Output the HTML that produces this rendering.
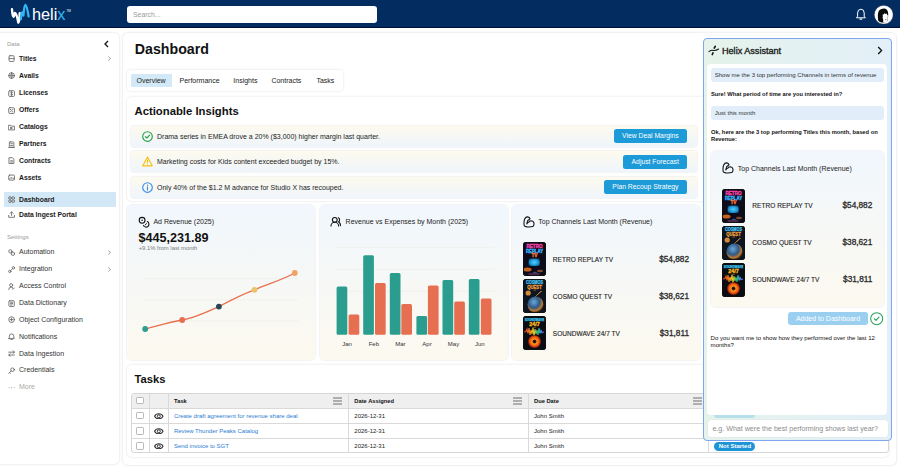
<!DOCTYPE html>
<html><head><meta charset="utf-8">
<style>
*{box-sizing:border-box;margin:0;padding:0}
html,body{width:900px;height:469px;overflow:hidden;background:#fff;font-family:"Liberation Sans",sans-serif;color:#111;position:relative}
.a{position:absolute}
.nw{white-space:nowrap}
#hdr{left:0;top:0;width:900px;height:28.4px;background:#032d60;border-bottom:1.6px solid #000f38}
#search{left:127px;top:6px;width:250px;height:17px;background:#fff;border-radius:3px}
#search span{position:absolute;left:6px;top:4.6px;font-size:6.9px;color:#9a9a9a}
.card{background:#fff;border-radius:5px;box-shadow:0 0 2px 1px rgba(0,0,0,0.07)}
#side{left:-6px;top:32.8px;width:125px;height:431.5px}
.sl{position:absolute;left:7px;font-size:6px;color:#8a8a8a}
.si{position:absolute;left:19px;font-size:6.9px;line-height:8px;color:#222;white-space:nowrap}
.si.b{font-weight:700;color:#1a1a1a}
.ic{position:absolute;left:8px;width:7px;height:7px}
.chev{position:absolute;left:106px;width:5px;height:6px}
#main{left:123.3px;top:32.8px;width:772.7px;height:432.2px}
.sub{position:absolute;background:#fff;border-radius:5px;box-shadow:0 0 2px 1px rgba(0,0,0,0.06)}
.tab{position:absolute;top:80.5px;font-size:7px;line-height:8px;color:#222;white-space:nowrap;transform:translateY(-50%)}
.row{position:absolute;left:131px;width:566px;height:21px;border-radius:3px;background:linear-gradient(#fdfaee,#eff5fc);box-shadow:0 0 1px 1px rgba(0,0,0,0.05)}
.row .t{position:absolute;left:26px;top:7px;font-size:7px;line-height:8px;color:#222;white-space:nowrap}
.btn{position:absolute;right:10px;top:3.5px;height:14px;background:#1d9ad8;border-radius:2.5px;color:#fff;font-size:6.8px;line-height:14px;text-align:center;white-space:nowrap}
.cc{position:absolute;top:205px;height:155px;border-radius:5px;background:linear-gradient(#f1f7fd,#fcf9ef);box-shadow:0 0 1px 1px rgba(0,0,0,0.05)}
.ctitle{position:absolute;font-size:7px;line-height:8px;color:#222;white-space:nowrap}
.ch{position:absolute;width:23px;height:34px;border-radius:2.5px;overflow:hidden;background:#0b0b14}
.cn{position:absolute;font-size:6.5px;line-height:8px;color:#222;white-space:nowrap;letter-spacing:0.05px;-webkit-text-stroke:0.12px #222}
.cp{position:absolute;font-size:8.25px;line-height:10px;color:#2a2a2a;font-weight:400;white-space:nowrap;-webkit-text-stroke:0.3px #2a2a2a}
table{border-collapse:collapse}
</style></head><body>

<!-- HEADER -->
<div id="hdr" class="a">
  <svg class="a" style="left:8px;top:2px" width="24" height="24" viewBox="8 2 24 24">
    <path d="M12 9.3 Q12.4 16.8 13.5 16.8 Q14.3 16.6 14.8 12.9 Q16.6 13.2 18.3 22.6 Q19.6 21.5 19.7 13.2" fill="none" stroke="#fff" stroke-width="2.4" stroke-linecap="round" stroke-linejoin="round"/>
    <path d="M20.9 19.3 Q21.2 12.2 22.1 12.3 Q22.9 12.8 23.4 15.5 Q24.2 4.9 25.3 4.9 Q26.8 5.2 28.6 16.4" fill="none" stroke="#2eb5f2" stroke-width="2.3" stroke-linecap="round" stroke-linejoin="round"/>
  </svg>
  <div class="a nw" style="left:32px;top:5px;font-size:16.3px;line-height:19px;color:#fff;letter-spacing:0">heli<span style="color:#35b8f2">x</span></div>
  <div class="a nw" style="left:66.5px;top:9px;font-size:3px;color:#fff">TM</div>
  <div id="search" class="a"><span>Search...</span></div>
  <svg class="a" style="left:855px;top:8px" width="12" height="13" viewBox="0 0 12 13">
    <path d="M2.6 8.6 L2.6 5 Q2.6 1.2 5.9 1.2 Q9.2 1.2 9.2 5 L9.2 8.6 L10.3 9.3 L10.3 9.8 L1.5 9.8 L1.5 9.3 Z" fill="none" stroke="#fff" stroke-width="1" stroke-linejoin="round"/>
    <path d="M5 11.1 L6.8 11.1" stroke="#fff" stroke-width="1.1" stroke-linecap="round"/>
  </svg>
  <svg class="a" style="left:873.5px;top:4.7px" width="19.4" height="19.4" viewBox="0 0 19.4 19.4">
    <circle cx="9.7" cy="9.7" r="9.5" fill="#fff" stroke="#0b1c45" stroke-width="0.5"/>
    <path d="M4.2 15.5 Q3.2 9 5 5.5 Q7.2 3.2 10.5 3.4 Q13.8 4 14.2 8.5 Q14.4 13 13.2 16.2 Q10.5 18 7.5 17.5 Q5 17 4.2 15.5Z" fill="#0a0a0a"/>
    <path d="M8.6 9.8 Q10 9.4 10.8 8 Q11.6 9.6 12.6 8.6 Q13.2 10 13.9 10.6 Q14 14 13 16.4 Q11 17.6 9.2 17.2 Q9.6 14.5 8.6 12.8 Q9.2 11.4 8.6 9.8Z" fill="#fff"/>
    <path d="M11.2 14.6 L12.3 14.9" stroke="#222" stroke-width="0.7"/>
  </svg>
</div>

<!-- SIDEBAR -->
<div id="side" class="a card"></div>
<!--SIDE--><div class="sl" style="top:40.8px;color:#9a9a9a">Data</div>
<svg class="a" style="left:103px;top:39.6px" width="7" height="8" viewBox="0 0 7 8"><path d="M5 1 L2 4 L5 7" fill="none" stroke="#111" stroke-width="1.3"/></svg>
<div class="sl" style="top:234px;color:#9a9a9a">Settings</div>
<div class="a" style="left:4px;top:192.2px;width:111.5px;height:14.5px;background:#d3e8f6;border-radius:1px"></div>
<div class="si" style="top:54.699999999999996px;font-size:6.8px;font-weight:700;color:#1a1a1a">Titles</div>
<svg class="a" style="left:7.7px;top:55.3px" width="7.2" height="7.2" viewBox="0 0 8 8"><rect x="1.2" y="0.8" width="5.6" height="6.4" rx="1" stroke="#666" stroke-width="0.95" fill="none" stroke-linecap="round" stroke-linejoin="round"/><path d="M1.2 4H6.8" stroke="#666" stroke-width="0.95" fill="none" stroke-linecap="round" stroke-linejoin="round"/></svg>
<svg class="a" style="left:106.5px;top:56.3px" width="5" height="5" viewBox="0 0 5 5"><path d="M1.3 0.5L3.5 2.5L1.3 4.5" fill="none" stroke="#888" stroke-width="0.8"/></svg>
<div class="si" style="top:71.6px;font-size:6.8px;font-weight:700;color:#1a1a1a">Avails</div>
<svg class="a" style="left:7.7px;top:72.2px" width="7.2" height="7.2" viewBox="0 0 8 8"><circle cx="4" cy="4" r="3.2" stroke="#666" stroke-width="0.95" fill="none" stroke-linecap="round" stroke-linejoin="round"/><path d="M0.8 4H7.2M4 0.8Q2 4 4 7.2Q6 4 4 0.8" stroke="#666" stroke-width="0.95" fill="none" stroke-linecap="round" stroke-linejoin="round"/></svg>
<div class="si" style="top:89.1px;font-size:6.8px;font-weight:700;color:#1a1a1a">Licenses</div>
<svg class="a" style="left:7.7px;top:89.7px" width="7.2" height="7.2" viewBox="0 0 8 8"><rect x="0.8" y="0.8" width="6.4" height="6.4" rx="1.2" stroke="#666" stroke-width="0.95" fill="none" stroke-linecap="round" stroke-linejoin="round"/><path d="M5 2.6Q4 2 3.2 2.6Q2.6 3.5 4 4Q5.4 4.5 4.8 5.4Q4 6 3 5.4M4 1.8V6.2" stroke="#666" stroke-width="0.95" fill="none" stroke-linecap="round" stroke-linejoin="round"/></svg>
<div class="si" style="top:106.0px;font-size:6.8px;font-weight:700;color:#1a1a1a">Offers</div>
<svg class="a" style="left:7.7px;top:106.60000000000001px" width="7.2" height="7.2" viewBox="0 0 8 8"><rect x="0.8" y="0.8" width="6.4" height="6.4" rx="1.2" stroke="#666" stroke-width="0.95" fill="none" stroke-linecap="round" stroke-linejoin="round"/><path d="M2.5 5.5L5.5 2.5" stroke="#666" stroke-width="0.95" fill="none" stroke-linecap="round" stroke-linejoin="round"/><circle cx="2.7" cy="2.7" r="0.6" fill="#444"/><circle cx="5.3" cy="5.3" r="0.6" fill="#444"/></svg>
<div class="si" style="top:122.89999999999999px;font-size:6.8px;font-weight:700;color:#1a1a1a">Catalogs</div>
<svg class="a" style="left:7.7px;top:123.5px" width="7.2" height="7.2" viewBox="0 0 8 8"><path d="M0.8 1.5H3.2L4 2.4H7.2V6.6H0.8Z" stroke="#666" stroke-width="0.95" fill="none" stroke-linecap="round" stroke-linejoin="round"/><path d="M3.3 3.6L5 4.5L3.3 5.4Z" stroke="#666" stroke-width="0.95" fill="none" stroke-linecap="round" stroke-linejoin="round"/></svg>
<div class="si" style="top:139.9px;font-size:6.8px;font-weight:700;color:#1a1a1a">Partners</div>
<svg class="a" style="left:7.7px;top:140.5px" width="7.2" height="7.2" viewBox="0 0 8 8"><rect x="1.5" y="1" width="5" height="6" rx="0.8" stroke="#666" stroke-width="0.95" fill="none" stroke-linecap="round" stroke-linejoin="round"/><path d="M0.8 7.2H7.2M3 3H5M3 5H5" stroke="#666" stroke-width="0.95" fill="none" stroke-linecap="round" stroke-linejoin="round"/></svg>
<div class="si" style="top:156.70000000000002px;font-size:6.8px;font-weight:700;color:#1a1a1a">Contracts</div>
<svg class="a" style="left:7.7px;top:157.3px" width="7.2" height="7.2" viewBox="0 0 8 8"><path d="M1.5 0.8H5L6.6 2.4V7.2H1.5Z" stroke="#666" stroke-width="0.95" fill="none" stroke-linecap="round" stroke-linejoin="round"/><path d="M3 4.2H5M3 5.6H5" stroke="#666" stroke-width="0.95" fill="none" stroke-linecap="round" stroke-linejoin="round"/></svg>
<div class="si" style="top:173.60000000000002px;font-size:6.8px;font-weight:700;color:#1a1a1a">Assets</div>
<svg class="a" style="left:7.7px;top:174.20000000000002px" width="7.2" height="7.2" viewBox="0 0 8 8"><rect x="0.8" y="1.2" width="6.4" height="5.6" rx="1" stroke="#666" stroke-width="0.95" fill="none" stroke-linecap="round" stroke-linejoin="round"/><path d="M1.5 5.8L3.2 3.8L4.5 5L5.3 4.2L6.5 5.8" stroke="#666" stroke-width="0.95" fill="none" stroke-linecap="round" stroke-linejoin="round"/></svg>
<div class="si" style="top:195.8px;font-size:6.8px;font-weight:700;color:#1a1a1a">Dashboard</div>
<svg class="a" style="left:7.7px;top:196.4px" width="7.2" height="7.2" viewBox="0 0 8 8"><circle cx="2.2" cy="2.2" r="1.5" stroke="#666" stroke-width="0.95" fill="none" stroke-linecap="round" stroke-linejoin="round"/><circle cx="5.8" cy="2.2" r="1.5" stroke="#666" stroke-width="0.95" fill="none" stroke-linecap="round" stroke-linejoin="round"/><circle cx="2.2" cy="5.8" r="1.5" stroke="#666" stroke-width="0.95" fill="none" stroke-linecap="round" stroke-linejoin="round"/><circle cx="5.8" cy="5.8" r="1.5" stroke="#666" stroke-width="0.95" fill="none" stroke-linecap="round" stroke-linejoin="round"/></svg>
<div class="si" style="top:210.8px;font-size:6.8px;font-weight:700;color:#1a1a1a">Data Ingest Portal</div>
<svg class="a" style="left:7.7px;top:211.4px" width="7.2" height="7.2" viewBox="0 0 8 8"><path d="M0.8 4.8V7H7.2V4.8M4 5V1M2.4 2.6L4 1L5.6 2.6" stroke="#666" stroke-width="0.95" fill="none" stroke-linecap="round" stroke-linejoin="round"/></svg>
<div class="si" style="top:248.3px;font-size:7.0px;color:#333">Automation</div>
<svg class="a" style="left:7.7px;top:248.9px" width="7.2" height="7.2" viewBox="0 0 8 8"><circle cx="2.6" cy="2.6" r="1.8" stroke="#666" stroke-width="0.95" fill="none" stroke-linecap="round" stroke-linejoin="round"/><circle cx="5.5" cy="5.3" r="1.9" stroke="#666" stroke-width="0.95" fill="none" stroke-linecap="round" stroke-linejoin="round"/><path d="M3.6 4 L4.3 4.6" stroke="#666" stroke-width="0.95" fill="none" stroke-linecap="round" stroke-linejoin="round"/></svg>
<svg class="a" style="left:106.5px;top:249.9px" width="5" height="5" viewBox="0 0 5 5"><path d="M1.3 0.5L3.5 2.5L1.3 4.5" fill="none" stroke="#888" stroke-width="0.8"/></svg>
<div class="si" style="top:265.3px;font-size:7.0px;color:#333">Integration</div>
<svg class="a" style="left:7.7px;top:265.9px" width="7.2" height="7.2" viewBox="0 0 8 8"><circle cx="2" cy="6" r="1.3" stroke="#666" stroke-width="0.95" fill="none" stroke-linecap="round" stroke-linejoin="round"/><circle cx="6" cy="2" r="1.3" stroke="#666" stroke-width="0.95" fill="none" stroke-linecap="round" stroke-linejoin="round"/><path d="M3 5L5 3" stroke="#666" stroke-width="0.95" fill="none" stroke-linecap="round" stroke-linejoin="round"/></svg>
<svg class="a" style="left:106.5px;top:266.9px" width="5" height="5" viewBox="0 0 5 5"><path d="M1.3 0.5L3.5 2.5L1.3 4.5" fill="none" stroke="#888" stroke-width="0.8"/></svg>
<div class="si" style="top:282.1px;font-size:7.0px;color:#333">Access Control</div>
<svg class="a" style="left:7.7px;top:282.7px" width="7.2" height="7.2" viewBox="0 0 8 8"><circle cx="3.5" cy="2.4" r="1.7" stroke="#666" stroke-width="0.95" fill="none" stroke-linecap="round" stroke-linejoin="round"/><path d="M0.8 7.2Q0.8 4.6 3.5 4.6Q4.6 4.6 5.2 5.1M4.9 6.3L5.7 7L7.2 5.4" stroke="#666" stroke-width="0.95" fill="none" stroke-linecap="round" stroke-linejoin="round"/></svg>
<div class="si" style="top:298.90000000000003px;font-size:7.0px;color:#333">Data Dictionary</div>
<svg class="a" style="left:7.7px;top:299.5px" width="7.2" height="7.2" viewBox="0 0 8 8"><rect x="1" y="0.8" width="6" height="6.4" rx="0.8" stroke="#666" stroke-width="0.95" fill="none" stroke-linecap="round" stroke-linejoin="round"/><path d="M2.8 2.5H5.2M2.8 4H5.2M2.8 5.5H4.5" stroke="#666" stroke-width="0.95" fill="none" stroke-linecap="round" stroke-linejoin="round"/></svg>
<div class="si" style="top:315.7px;font-size:7.0px;color:#333">Object Configuration</div>
<svg class="a" style="left:7.7px;top:316.29999999999995px" width="7.2" height="7.2" viewBox="0 0 8 8"><circle cx="4" cy="4" r="3.2" stroke="#666" stroke-width="0.95" fill="none" stroke-linecap="round" stroke-linejoin="round"/><path d="M4 2.4V5.6M2.4 4H5.6" stroke="#666" stroke-width="0.95" fill="none" stroke-linecap="round" stroke-linejoin="round"/></svg>
<div class="si" style="top:332.5px;font-size:7.0px;color:#333">Notifications</div>
<svg class="a" style="left:7.7px;top:333.09999999999997px" width="7.2" height="7.2" viewBox="0 0 8 8"><path d="M1.5 5.6V3.6Q1.5 1 4 1Q6.5 1 6.5 3.6V5.6L7.1 6.2H0.9Z M3.2 7.2H4.8" stroke="#666" stroke-width="0.95" fill="none" stroke-linecap="round" stroke-linejoin="round"/></svg>
<div class="si" style="top:349.7px;font-size:7.0px;color:#333">Data Ingestion</div>
<svg class="a" style="left:7.7px;top:350.29999999999995px" width="7.2" height="7.2" viewBox="0 0 8 8"><path d="M0.8 2.4H7.2M5.5 0.8L7.2 2.4L5.5 4M7.2 5.6H0.8M2.5 4L0.8 5.6L2.5 7.2" stroke="#666" stroke-width="0.95" fill="none" stroke-linecap="round" stroke-linejoin="round"/></svg>
<div class="si" style="top:366.3px;font-size:7.0px;color:#333">Credentials</div>
<svg class="a" style="left:7.7px;top:366.9px" width="7.2" height="7.2" viewBox="0 0 8 8"><circle cx="5" cy="3" r="2" stroke="#666" stroke-width="0.95" fill="none" stroke-linecap="round" stroke-linejoin="round"/><path d="M3.6 4.4L0.9 7.1M1.8 6.2L2.6 7" stroke="#666" stroke-width="0.95" fill="none" stroke-linecap="round" stroke-linejoin="round"/></svg>
<div class="si" style="top:383.3px;font-size:7.0px;color:#aaa">More</div>
<svg class="a" style="left:7.7px;top:383.9px" width="7.2" height="7.2" viewBox="0 0 8 8"><circle cx="1.2" cy="4" r="0.6" fill="#aaa"/><circle cx="4" cy="4" r="0.6" fill="#aaa"/><circle cx="6.8" cy="4" r="0.6" fill="#aaa"/></svg><!--/SIDE-->

<!-- MAIN -->
<div id="main" class="a card"></div>
<div class="a nw" style="left:134.8px;top:41.3px;font-size:14.2px;line-height:17px;font-weight:700;color:#111">Dashboard</div>
<div class="sub" style="left:127px;top:70px;width:216px;height:21px;border-radius:4px"></div>
<div class="a" style="left:131px;top:74px;width:41px;height:13px;background:#d4e9f7;border-radius:1px"></div>
<div class="tab" style="left:136.5px">Overview</div>
<div class="tab" style="left:179.5px">Performance</div>
<div class="tab" style="left:233.3px">Insights</div>
<div class="tab" style="left:271.4px">Contracts</div>
<div class="tab" style="left:316.4px">Tasks</div>

<!-- Actionable insights -->
<div class="sub" style="left:127px;top:97px;width:580px;height:104px"></div>
<div class="a nw" style="left:134.5px;top:103.8px;font-size:11.3px;line-height:14px;font-weight:700;color:#111">Actionable Insights</div>
<div class="row" style="top:125.5px"><svg class="a" style="left:11px;top:5px" width="11" height="11" viewBox="0 0 11 11"><circle cx="5.5" cy="5.5" r="4.8" fill="none" stroke="#25a24e" stroke-width="1.15"/><path d="M3.4 5.7 L4.9 7 L7.6 4.2" fill="none" stroke="#25a24e" stroke-width="1.15" stroke-linecap="round" stroke-linejoin="round"/></svg><div class="t">Drama series in EMEA drove a 20% ($3,000) higher margin last quarter.</div><div class="btn" style="width:73.3px">View Deal Margins</div></div>
<div class="row" style="top:151px"><svg class="a" style="left:11px;top:5px" width="11" height="11" viewBox="0 0 11 11"><path d="M5.5 1 L10.2 9.8 L0.8 9.8 Z" fill="none" stroke="#f4c20d" stroke-width="1.15" stroke-linejoin="round"/><path d="M5.5 4.2 V6.6" stroke="#f4c20d" stroke-width="1.1" stroke-linecap="round"/><circle cx="5.5" cy="8.2" r="0.6" fill="#f4c20d"/></svg><div class="t">Marketing costs for Kids content exceeded budget by 15%.</div><div class="btn" style="width:63.6px">Adjust Forecast</div></div>
<div class="row" style="top:176.5px"><svg class="a" style="left:11px;top:5px" width="11" height="11" viewBox="0 0 11 11"><circle cx="5.5" cy="5.5" r="4.8" fill="none" stroke="#3a8ee6" stroke-width="1.15"/><path d="M5.5 4.8 V8" stroke="#3a8ee6" stroke-width="1.15" stroke-linecap="round"/><circle cx="5.5" cy="3.2" r="0.65" fill="#3a8ee6"/></svg><div class="t">Only 40% of the $1.2 M advance for Studio X has recouped.</div><div class="btn" style="width:83.2px">Plan Recoup Strategy</div></div>

<!-- chart cards -->
<div class="cc" style="left:127px;width:188px"></div>
<div class="cc" style="left:319.5px;width:188px"></div>
<div class="cc" style="left:511.5px;width:188px"></div>

<!-- tasks -->
<div class="sub" style="left:127px;top:365px;width:762px;height:92px"></div>
<div class="a nw" style="left:134.5px;top:372px;font-size:11.2px;line-height:14px;font-weight:700;color:#111">Tasks</div>


<!-- card 1 content -->
<svg class="a" style="left:138px;top:215.5px" width="12" height="12" viewBox="0 0 12 12">
  <circle cx="4.1" cy="4.3" r="2.9" fill="none" stroke="#111" stroke-width="1.1"/>
  <circle cx="4.1" cy="4.3" r="0.8" fill="#111"/>
  <path d="M9.3 5.6 A2.9 2.9 0 1 1 5.4 9.4" fill="none" stroke="#111" stroke-width="1.1" stroke-linecap="round"/>
  <path d="M7.3 8.9 L8.3 7.6" stroke="#111" stroke-width="1" stroke-linecap="round"/>
</svg>
<div class="ctitle" style="left:153.4px;top:218px">Ad Revenue (2025)</div>
<div class="a nw" style="left:138.5px;top:231px;font-size:12.6px;line-height:14px;font-weight:700;color:#111">$445,231.89</div>
<div class="a nw" style="left:138.7px;top:245px;font-size:5.85px;line-height:7px;color:#7a7a7a">+9.1% from last month</div>
<svg class="a" style="left:127px;top:205px" width="188" height="155" viewBox="127 205 188 155">
  <g stroke="#ecebe6" stroke-width="0.6"><path d="M144 278.6H298M144 299.8H298M144 320.9H298"/></g>
  <path d="M145.2 329 C157 326 170 322 182.2 320 C195 318 207 312 218.9 306.6 C231 300 243 294 254.5 289.8 C268 284 282 280 294.8 273" fill="none" stroke="#e8704f" stroke-width="1.3"/>
  <circle cx="145.2" cy="329" r="2.9" fill="#2a9d8f"/>
  <circle cx="182.2" cy="320" r="2.9" fill="#e76f51"/>
  <circle cx="218.9" cy="306.6" r="2.9" fill="#264653"/>
  <circle cx="254.5" cy="289.8" r="2.9" fill="#e9c46a"/>
  <circle cx="294.8" cy="273" r="2.9" fill="#f4a261"/>
</svg>

<!-- card 2 content -->
<svg class="a" style="left:330.3px;top:216px" width="11.5" height="11.5" viewBox="0 0 24 24">
  <path d="M18 21a8 8 0 0 0-16 0" fill="none" stroke="#111" stroke-width="2.3" stroke-linecap="round"/>
  <circle cx="10" cy="8" r="5" fill="none" stroke="#111" stroke-width="2.3"/>
  <path d="M22 20c0-3.37-2-6.5-4-8a5 5 0 0 0-.45-8.3" fill="none" stroke="#111" stroke-width="2.3" stroke-linecap="round"/>
</svg>
<div class="ctitle" style="left:345.6px;top:218px">Revenue vs Expenses by Month (2025)</div>
<svg class="a" style="left:319.5px;top:205px" width="188" height="155" viewBox="319.5 205 188 155">
  <g stroke="#ecebe6" stroke-width="0.6"><path d="M335 247.4H494M335 269.3H494M335 291.2H494"/></g>
  <g fill="#2a9d8f">
    <rect x="336.1" y="286.5" width="10.7" height="48.3" rx="1.5"/>
    <rect x="362.7" y="255.3" width="10.7" height="79.5" rx="1.5"/>
    <rect x="389.3" y="273" width="10.7" height="61.8" rx="1.5"/>
    <rect x="415.9" y="316" width="10.7" height="18.8" rx="1.5"/>
    <rect x="442" y="280" width="10.7" height="54.8" rx="1.5"/>
    <rect x="468.3" y="279.1" width="10.7" height="55.7" rx="1.5"/>
  </g>
  <g fill="#e76f51">
    <rect x="348.1" y="314.4" width="10.7" height="20.4" rx="1.5"/>
    <rect x="374.5" y="283" width="10.7" height="51.8" rx="1.5"/>
    <rect x="400.8" y="304" width="10.7" height="30.8" rx="1.5"/>
    <rect x="427.4" y="285.5" width="10.7" height="49.3" rx="1.5"/>
    <rect x="453.7" y="301.4" width="10.7" height="33.4" rx="1.5"/>
    <rect x="480.3" y="298.6" width="10.7" height="36.2" rx="1.5"/>
  </g>
  <g font-family="Liberation Sans" font-size="6" fill="#333" text-anchor="middle">
    <text x="346.6" y="345.6">Jan</text><text x="373.3" y="345.6">Feb</text><text x="399.9" y="345.6">Mar</text>
    <text x="426.5" y="345.6">Apr</text><text x="453" y="345.6">May</text><text x="479.3" y="345.6">Jun</text>
  </g>
</svg>

<!-- card 3 content -->
<!--CHAN1--><svg class="a" style="left:522.5px;top:215.5px" width="12" height="12" viewBox="0 0 12 12"><path d="M1.3 9.8 Q0.5 6 1.7 3 Q2.8 0.8 4.7 0.9 Q6.5 1.2 7 2.7 Q6 4 4.7 4.6 Q3.9 6.5 3.8 8 Q4.8 6.5 5.9 6.1 Q7 4.8 8.2 4.8 Q10.5 5.2 10.9 6.9 Q11.2 9.5 10.1 10.3 Q8 11.2 4 10.9 Q2.2 10.7 1.3 9.8Z" fill="none" stroke="#111" stroke-width="1.1" stroke-linejoin="round" stroke-linecap="round"/></svg>
<div class="ctitle" style="left:538.3px;top:218px">Top Channels Last Month (Revenue)</div>
<div class="a" style="left:522.8px;top:242.2px;width:23px;height:34px"><svg width="23" height="34" viewBox="0 0 23 34"><defs><radialGradient id="g1" cx="0.5" cy="0.5" r="0.6"><stop offset="0" stop-color="#4fd2ff"/><stop offset="0.7" stop-color="#1a8fd0"/><stop offset="1" stop-color="#0b3a60"/></radialGradient></defs>
<rect width="23" height="34" rx="3" fill="#0e0b1a"/>
<g font-family="Liberation Sans" font-weight="700" text-anchor="middle">
<text x="11.5" y="6.4" font-size="5.2" textLength="16" lengthAdjust="spacingAndGlyphs" fill="#ff45b0" stroke="#ff45b0" stroke-width="0.35">RETRO</text>
<text x="11.5" y="10.6" font-size="5" textLength="17" lengthAdjust="spacingAndGlyphs" fill="#35b5ff" stroke="#35b5ff" stroke-width="0.35">REPLAY</text>
<text x="11.5" y="15" font-size="4.8" fill="#ff7a3a" stroke="#ff7a3a" stroke-width="0.3">TV</text></g>
<rect x="5.6" y="16.5" width="11.2" height="7.6" rx="1.4" fill="url(#g1)"/>
<ellipse cx="4.5" cy="27.5" rx="4" ry="2" fill="#d86a1e" opacity="0.9"/>
<ellipse cx="17" cy="29" rx="3" ry="1.2" fill="#a05a30" opacity="0.8"/><ellipse cx="12" cy="30.5" rx="2" ry="0.8" fill="#3070c0" opacity="0.8"/>
<ellipse cx="11" cy="32" rx="6" ry="1.3" fill="#5a3050" opacity="0.8"/>
<rect x="0.3" y="0.3" width="22.4" height="33.4" rx="2.8" fill="none" stroke="#111" stroke-width="0.8"/></svg></div>
<div class="cn" style="left:552.8px;top:255.6px">RETRO REPLAY TV</div>
<div class="cp" style="left:600px;width:89px;text-align:right;top:254.6px">$54,882</div>
<div class="a" style="left:522.8px;top:279.2px;width:23px;height:34px"><svg width="23" height="34" viewBox="0 0 23 34"><defs><radialGradient id="g2" cx="0.4" cy="0.35" r="0.65"><stop offset="0" stop-color="#6aa8d8"/><stop offset="0.55" stop-color="#2f5a86"/><stop offset="0.85" stop-color="#c07a30"/><stop offset="1" stop-color="#402810"/></radialGradient></defs>
<rect width="23" height="34" rx="3" fill="#0d1520"/>
<g font-family="Liberation Sans" font-weight="700" text-anchor="middle">
<text x="11.5" y="5.4" font-size="4.6" textLength="17" lengthAdjust="spacingAndGlyphs" fill="#45c0f0" stroke="#45c0f0" stroke-width="0.3">COSMOS</text>
<text x="11.5" y="10.2" font-size="5.2" textLength="14.5" lengthAdjust="spacingAndGlyphs" fill="#f0a040" stroke="#f0a040" stroke-width="0.3">QUEST</text>
<text x="11.5" y="12.4" font-size="2" fill="#c98a3a">TV</text></g>
<circle cx="5.2" cy="14" r="2.6" fill="#d48a3a"/>
<path d="M8 22 L18 12" stroke="#c87a30" stroke-width="1" opacity="0.8"/>
<path d="M14 16 L19 12" stroke="#e0a040" stroke-width="0.8" opacity="0.7"/>
<circle cx="12.5" cy="25.5" r="8" fill="url(#g2)"/>
<rect x="0.3" y="0.3" width="22.4" height="33.4" rx="2.8" fill="none" stroke="#111" stroke-width="0.8"/></svg></div>
<div class="cn" style="left:552.8px;top:292.59999999999997px">COSMO QUEST TV</div>
<div class="cp" style="left:600px;width:89px;text-align:right;top:291.59999999999997px">$38,621</div>
<div class="a" style="left:522.8px;top:316.2px;width:23px;height:34px"><svg width="23" height="34" viewBox="0 0 23 34"><defs><linearGradient id="g3" x1="0" x2="1"><stop offset="0" stop-color="#e8302a"/><stop offset="0.3" stop-color="#f08a20"/><stop offset="0.5" stop-color="#e8d030"/><stop offset="0.65" stop-color="#40c060"/><stop offset="0.85" stop-color="#30a0f0"/><stop offset="1" stop-color="#9050e0"/></linearGradient><radialGradient id="g4"><stop offset="0" stop-color="#200"/><stop offset="0.25" stop-color="#402010"/><stop offset="0.35" stop-color="#ff9a20"/><stop offset="0.75" stop-color="#e84a10"/><stop offset="1" stop-color="#501008"/></radialGradient></defs>
<rect width="23" height="34" rx="3" fill="#0a0d14"/>
<g font-family="Liberation Sans" font-weight="700" text-anchor="middle">
<text x="11.5" y="5.2" font-size="3.8" textLength="19.5" lengthAdjust="spacingAndGlyphs" fill="#3cc6f0" stroke="#3cc6f0" stroke-width="0.25">SOUNDWAVE</text>
<text x="11.5" y="10.2" font-size="5.2" textLength="10.5" lengthAdjust="spacingAndGlyphs" fill="#f8b820" stroke="#f8b820" stroke-width="0.3">24/7</text>
<text x="11.5" y="12.3" font-size="2" fill="#e0a020">TV</text></g>
<path d="M1 16 L3 15.5 L4 13 L5 17.5 L6 12 L7 19 L8 14 L9 18 L10 11.5 L11 20 L12 13 L13 18 L14 14 L15 19 L16 12 L17 17.5 L18 14.5 L19 16.5 L21 16" fill="none" stroke="url(#g3)" stroke-width="1.1"/>
<circle cx="11.5" cy="25.5" r="6.6" fill="url(#g4)"/>
<rect x="0.3" y="0.3" width="22.4" height="33.4" rx="2.8" fill="none" stroke="#111" stroke-width="0.8"/></svg></div>
<div class="cn" style="left:552.8px;top:329.59999999999997px">SOUNDWAVE 24/7 TV</div>
<div class="cp" style="left:600px;width:89px;text-align:right;top:328.59999999999997px">$31,811</div><!--/CHAN1-->
<!--TABLE--><div class="a" style="left:130.7px;top:393.3px;width:758.3px;height:60.099999999999966px;border:1px solid #d6d6d6;border-radius:3px;overflow:hidden;background:#fff">
<div class="a" style="left:0;top:0;width:100%;height:15px;background:#efefef"></div>
<div class="a" style="left:0;top:14.0px;width:100%;height:1px;background:#d9d9d9"></div>
<div class="a" style="left:0;top:29.0px;width:100%;height:1px;background:#d9d9d9"></div>
<div class="a" style="left:0;top:44.19999999999999px;width:100%;height:1px;background:#d9d9d9"></div>
<div class="a" style="left:17.200000000000017px;top:0;width:1px;height:100%;background:#d9d9d9"></div>
<div class="a" style="left:36.400000000000006px;top:0;width:1px;height:100%;background:#d9d9d9"></div>
<div class="a" style="left:216.40000000000003px;top:0;width:1px;height:100%;background:#d9d9d9"></div>
<div class="a" style="left:396.8px;top:0;width:1px;height:100%;background:#d9d9d9"></div>
<div class="a" style="left:576.4000000000001px;top:0;width:1px;height:100%;background:#d9d9d9"></div>
</div>
<div class="a" style="left:136.2px;top:397.1px;width:7.4px;height:7.4px;border:1px solid #b9b9b9;border-radius:1.2px;background:#fff"></div>
<div class="a" style="left:136.2px;top:412.1px;width:7.4px;height:7.4px;border:1px solid #b9b9b9;border-radius:1.2px;background:#fff"></div>
<div class="a" style="left:136.2px;top:427.2px;width:7.4px;height:7.4px;border:1px solid #b9b9b9;border-radius:1.2px;background:#fff"></div>
<div class="a" style="left:136.2px;top:442.2px;width:7.4px;height:7.4px;border:1px solid #b9b9b9;border-radius:1.2px;background:#fff"></div>
<svg class="a" style="left:154px;top:412.59999999999997px" width="9.6" height="6.6" viewBox="0 0 9.6 6.6"><path d="M0.6 3.3 C2 -0.1 7.6 -0.1 9 3.3 C7.6 6.7 2 6.7 0.6 3.3Z" fill="none" stroke="#333" stroke-width="1.05"/><circle cx="4.8" cy="3.3" r="1.5" fill="none" stroke="#333" stroke-width="1"/></svg>
<svg class="a" style="left:154px;top:427.7px" width="9.6" height="6.6" viewBox="0 0 9.6 6.6"><path d="M0.6 3.3 C2 -0.1 7.6 -0.1 9 3.3 C7.6 6.7 2 6.7 0.6 3.3Z" fill="none" stroke="#333" stroke-width="1.05"/><circle cx="4.8" cy="3.3" r="1.5" fill="none" stroke="#333" stroke-width="1"/></svg>
<svg class="a" style="left:154px;top:442.8px" width="9.6" height="6.6" viewBox="0 0 9.6 6.6"><path d="M0.6 3.3 C2 -0.1 7.6 -0.1 9 3.3 C7.6 6.7 2 6.7 0.6 3.3Z" fill="none" stroke="#333" stroke-width="1.05"/><circle cx="4.8" cy="3.3" r="1.5" fill="none" stroke="#333" stroke-width="1"/></svg>
<div class="a nw" style="left:174.1px;top:396.8px;font-size:5.75px;line-height:8px;font-weight:700;color:#111">Task</div>
<div class="a nw" style="left:354.3px;top:396.8px;font-size:5.75px;line-height:8px;font-weight:700;color:#111">Date Assigned</div>
<div class="a nw" style="left:534px;top:396.8px;font-size:5.75px;line-height:8px;font-weight:700;color:#111">Due Date</div>
<svg class="a" style="left:332.7px;top:396.8px" width="9" height="8" viewBox="0 0 9 8"><path d="M0 1H9M0 4H9M0 7H9" stroke="#666" stroke-width="0.95"/></svg>
<svg class="a" style="left:513px;top:396.8px" width="9" height="8" viewBox="0 0 9 8"><path d="M0 1H9M0 4H9M0 7H9" stroke="#666" stroke-width="0.95"/></svg>
<svg class="a" style="left:693.4px;top:396.8px" width="9" height="8" viewBox="0 0 9 8"><path d="M0 1H9M0 4H9M0 7H9" stroke="#666" stroke-width="0.95"/></svg>
<div class="a nw" style="left:173.9px;top:411.9px;font-size:6px;line-height:8px;color:#2d7dd2">Create draft agreement for revenue share deal</div>
<div class="a nw" style="left:354.3px;top:411.9px;font-size:6px;line-height:8px;color:#222">2026-12-31</div>
<div class="a nw" style="left:534px;top:411.9px;font-size:6px;line-height:8px;color:#222">John Smith</div>
<div class="a nw" style="left:173.9px;top:427px;font-size:6px;line-height:8px;color:#2d7dd2">Review Thunder Peaks Catalog</div>
<div class="a nw" style="left:354.3px;top:427px;font-size:6px;line-height:8px;color:#222">2026-12-31</div>
<div class="a nw" style="left:534px;top:427px;font-size:6px;line-height:8px;color:#222">John Smith</div>
<div class="a nw" style="left:173.9px;top:442.1px;font-size:6px;line-height:8px;color:#2d7dd2">Send invoice to SGT</div>
<div class="a nw" style="left:354.3px;top:442.1px;font-size:6px;line-height:8px;color:#222">2026-12-31</div>
<div class="a nw" style="left:534px;top:442.1px;font-size:6px;line-height:8px;color:#222">John Smith</div>
<div class="a nw" style="left:714.3px;top:441.7px;width:41.2px;height:9.2px;border-radius:5px;background:#1d94d6;color:#fff;font-size:6px;line-height:9.2px;font-weight:700;text-align:center">Not Started</div><!--/TABLE-->
<!--PANEL--><div class="a" style="left:703.4px;top:37.7px;width:188.6px;height:403.6px;border:1px solid #7ea5ee;border-radius:4px;background:linear-gradient(90deg,#e5f3eb,#e3eff8)"></div>
<svg class="a" style="left:707.5px;top:45px" width="12" height="11" viewBox="0 0 12 11"><path d="M1 6.6 Q3 5 5.2 5.4 Q7.8 5.8 10.6 4" fill="none" stroke="#1a1a1a" stroke-width="1.1" stroke-linecap="round"/><path d="M7.2 1.3 L6.3 3" stroke="#1a1a1a" stroke-width="1.7" stroke-linecap="round"/><path d="M5 7.8 L4.3 9.5" stroke="#1a1a1a" stroke-width="1.7" stroke-linecap="round"/></svg>
<div class="a nw" style="left:722px;top:45.8px;font-size:9.1px;line-height:10px;font-weight:400;color:#1a1a1a;-webkit-text-stroke:0.35px #1a1a1a">Helix Assistant</div>
<svg class="a" style="left:877px;top:45.9px" width="6" height="9" viewBox="0 0 6 9"><path d="M1.2 1 L4.6 4.5 L1.2 8" fill="none" stroke="#111" stroke-width="1.3"/></svg>
<div class="a" style="left:707.4px;top:64.4px;width:180.1px;height:350.6px;background:#fff;border-radius:4px"></div>
<div class="a" style="left:711px;top:67.6px;width:172.8px;height:14px;background:#e1eefa;border-radius:3px"></div>
<div class="a nw" style="left:714.7px;top:71px;font-size:6.05px;line-height:8px;color:#333">Show me the 3 top performing Channels in terms of revenue</div>
<div class="a nw" style="left:711px;top:89.8px;font-size:5.75px;line-height:8px;font-weight:700;color:#111">Sure! What period of time are you interested in?</div>
<div class="a" style="left:711px;top:106px;width:172.8px;height:14px;background:#e1eefa;border-radius:3px"></div>
<div class="a nw" style="left:714.7px;top:109.4px;font-size:6.05px;line-height:8px;color:#333">Just this month</div>
<div class="a" style="left:711px;top:128.7px;font-size:5.75px;line-height:7.2px;font-weight:700;color:#111;width:175px">Ok, here are the 3 top performing Titles this month, based on<br>Revenue:</div>
<div class="cc" style="left:710.5px;top:151.3px;width:173.1px;height:155.7px"></div>
<svg class="a" style="left:722.0px;top:162.1px" width="12" height="12" viewBox="0 0 12 12"><path d="M1.3 9.8 Q0.5 6 1.7 3 Q2.8 0.8 4.7 0.9 Q6.5 1.2 7 2.7 Q6 4 4.7 4.6 Q3.9 6.5 3.8 8 Q4.8 6.5 5.9 6.1 Q7 4.8 8.2 4.8 Q10.5 5.2 10.9 6.9 Q11.2 9.5 10.1 10.3 Q8 11.2 4 10.9 Q2.2 10.7 1.3 9.8Z" fill="none" stroke="#111" stroke-width="1.1" stroke-linejoin="round" stroke-linecap="round"/></svg>
<div class="ctitle" style="left:737.8px;top:164.6px">Top Channels Last Month (Revenue)</div>
<div class="a" style="left:722.3px;top:188.79999999999998px;width:23px;height:34px"><svg width="23" height="34" viewBox="0 0 23 34"><defs><radialGradient id="g1" cx="0.5" cy="0.5" r="0.6"><stop offset="0" stop-color="#4fd2ff"/><stop offset="0.7" stop-color="#1a8fd0"/><stop offset="1" stop-color="#0b3a60"/></radialGradient></defs>
<rect width="23" height="34" rx="3" fill="#0e0b1a"/>
<g font-family="Liberation Sans" font-weight="700" text-anchor="middle">
<text x="11.5" y="6.4" font-size="5.2" textLength="16" lengthAdjust="spacingAndGlyphs" fill="#ff45b0" stroke="#ff45b0" stroke-width="0.35">RETRO</text>
<text x="11.5" y="10.6" font-size="5" textLength="17" lengthAdjust="spacingAndGlyphs" fill="#35b5ff" stroke="#35b5ff" stroke-width="0.35">REPLAY</text>
<text x="11.5" y="15" font-size="4.8" fill="#ff7a3a" stroke="#ff7a3a" stroke-width="0.3">TV</text></g>
<rect x="5.6" y="16.5" width="11.2" height="7.6" rx="1.4" fill="url(#g1)"/>
<ellipse cx="4.5" cy="27.5" rx="4" ry="2" fill="#d86a1e" opacity="0.9"/>
<ellipse cx="17" cy="29" rx="3" ry="1.2" fill="#a05a30" opacity="0.8"/><ellipse cx="12" cy="30.5" rx="2" ry="0.8" fill="#3070c0" opacity="0.8"/>
<ellipse cx="11" cy="32" rx="6" ry="1.3" fill="#5a3050" opacity="0.8"/>
<rect x="0.3" y="0.3" width="22.4" height="33.4" rx="2.8" fill="none" stroke="#111" stroke-width="0.8"/></svg></div>
<div class="cn" style="left:752.3px;top:202.2px">RETRO REPLAY TV</div>
<div class="cp" style="left:783.3px;width:89px;text-align:right;top:201.2px">$54,882</div>
<div class="a" style="left:722.3px;top:225.79999999999998px;width:23px;height:34px"><svg width="23" height="34" viewBox="0 0 23 34"><defs><radialGradient id="g2" cx="0.4" cy="0.35" r="0.65"><stop offset="0" stop-color="#6aa8d8"/><stop offset="0.55" stop-color="#2f5a86"/><stop offset="0.85" stop-color="#c07a30"/><stop offset="1" stop-color="#402810"/></radialGradient></defs>
<rect width="23" height="34" rx="3" fill="#0d1520"/>
<g font-family="Liberation Sans" font-weight="700" text-anchor="middle">
<text x="11.5" y="5.4" font-size="4.6" textLength="17" lengthAdjust="spacingAndGlyphs" fill="#45c0f0" stroke="#45c0f0" stroke-width="0.3">COSMOS</text>
<text x="11.5" y="10.2" font-size="5.2" textLength="14.5" lengthAdjust="spacingAndGlyphs" fill="#f0a040" stroke="#f0a040" stroke-width="0.3">QUEST</text>
<text x="11.5" y="12.4" font-size="2" fill="#c98a3a">TV</text></g>
<circle cx="5.2" cy="14" r="2.6" fill="#d48a3a"/>
<path d="M8 22 L18 12" stroke="#c87a30" stroke-width="1" opacity="0.8"/>
<path d="M14 16 L19 12" stroke="#e0a040" stroke-width="0.8" opacity="0.7"/>
<circle cx="12.5" cy="25.5" r="8" fill="url(#g2)"/>
<rect x="0.3" y="0.3" width="22.4" height="33.4" rx="2.8" fill="none" stroke="#111" stroke-width="0.8"/></svg></div>
<div class="cn" style="left:752.3px;top:239.19999999999996px">COSMO QUEST TV</div>
<div class="cp" style="left:783.3px;width:89px;text-align:right;top:238.19999999999996px">$38,621</div>
<div class="a" style="left:722.3px;top:262.8px;width:23px;height:34px"><svg width="23" height="34" viewBox="0 0 23 34"><defs><linearGradient id="g3" x1="0" x2="1"><stop offset="0" stop-color="#e8302a"/><stop offset="0.3" stop-color="#f08a20"/><stop offset="0.5" stop-color="#e8d030"/><stop offset="0.65" stop-color="#40c060"/><stop offset="0.85" stop-color="#30a0f0"/><stop offset="1" stop-color="#9050e0"/></linearGradient><radialGradient id="g4"><stop offset="0" stop-color="#200"/><stop offset="0.25" stop-color="#402010"/><stop offset="0.35" stop-color="#ff9a20"/><stop offset="0.75" stop-color="#e84a10"/><stop offset="1" stop-color="#501008"/></radialGradient></defs>
<rect width="23" height="34" rx="3" fill="#0a0d14"/>
<g font-family="Liberation Sans" font-weight="700" text-anchor="middle">
<text x="11.5" y="5.2" font-size="3.8" textLength="19.5" lengthAdjust="spacingAndGlyphs" fill="#3cc6f0" stroke="#3cc6f0" stroke-width="0.25">SOUNDWAVE</text>
<text x="11.5" y="10.2" font-size="5.2" textLength="10.5" lengthAdjust="spacingAndGlyphs" fill="#f8b820" stroke="#f8b820" stroke-width="0.3">24/7</text>
<text x="11.5" y="12.3" font-size="2" fill="#e0a020">TV</text></g>
<path d="M1 16 L3 15.5 L4 13 L5 17.5 L6 12 L7 19 L8 14 L9 18 L10 11.5 L11 20 L12 13 L13 18 L14 14 L15 19 L16 12 L17 17.5 L18 14.5 L19 16.5 L21 16" fill="none" stroke="url(#g3)" stroke-width="1.1"/>
<circle cx="11.5" cy="25.5" r="6.6" fill="url(#g4)"/>
<rect x="0.3" y="0.3" width="22.4" height="33.4" rx="2.8" fill="none" stroke="#111" stroke-width="0.8"/></svg></div>
<div class="cn" style="left:752.3px;top:276.2px">SOUNDWAVE 24/7 TV</div>
<div class="cp" style="left:783.3px;width:89px;text-align:right;top:275.2px">$31,811</div>
<div class="a nw" style="left:787.9px;top:311.7px;width:80.2px;height:13.8px;background:#9acff0;border-radius:3px;color:#fff;font-size:7px;line-height:13.8px;text-align:center">Added to Dashboard</div>
<svg class="a" style="left:870.3px;top:312.2px" width="13.4" height="13.4" viewBox="0 0 13.4 13.4"><circle cx="6.7" cy="6.7" r="6" fill="none" stroke="#28a35a" stroke-width="1.1"/><path d="M4.3 6.9 L6 8.4 L9 5.2" fill="none" stroke="#28a35a" stroke-width="1.1" stroke-linecap="round" stroke-linejoin="round"/></svg>
<div class="a" style="left:710.6px;top:335.2px;font-size:6.05px;line-height:7px;color:#111;width:176px">Do you want me to show how they performed over the last 12<br>months?</div>
<div class="a" style="left:714px;top:415.3px;width:40.5px;height:3px;background:#b5dfe9;border-radius:0 0 3px 3px"></div>
<div class="a" style="left:707.5px;top:419.8px;width:180.1px;height:17.7px;background:#fff;border-radius:3.5px;box-shadow:0 0 0 0.5px #dfe8e8"></div>
<div class="a nw" style="left:712.4px;top:425px;font-size:7.1px;line-height:9px;color:#8c8c8c">e.g. What were the best performing shows last year?</div><!--/PANEL-->
<div id="rest"></div>
</body></html>
